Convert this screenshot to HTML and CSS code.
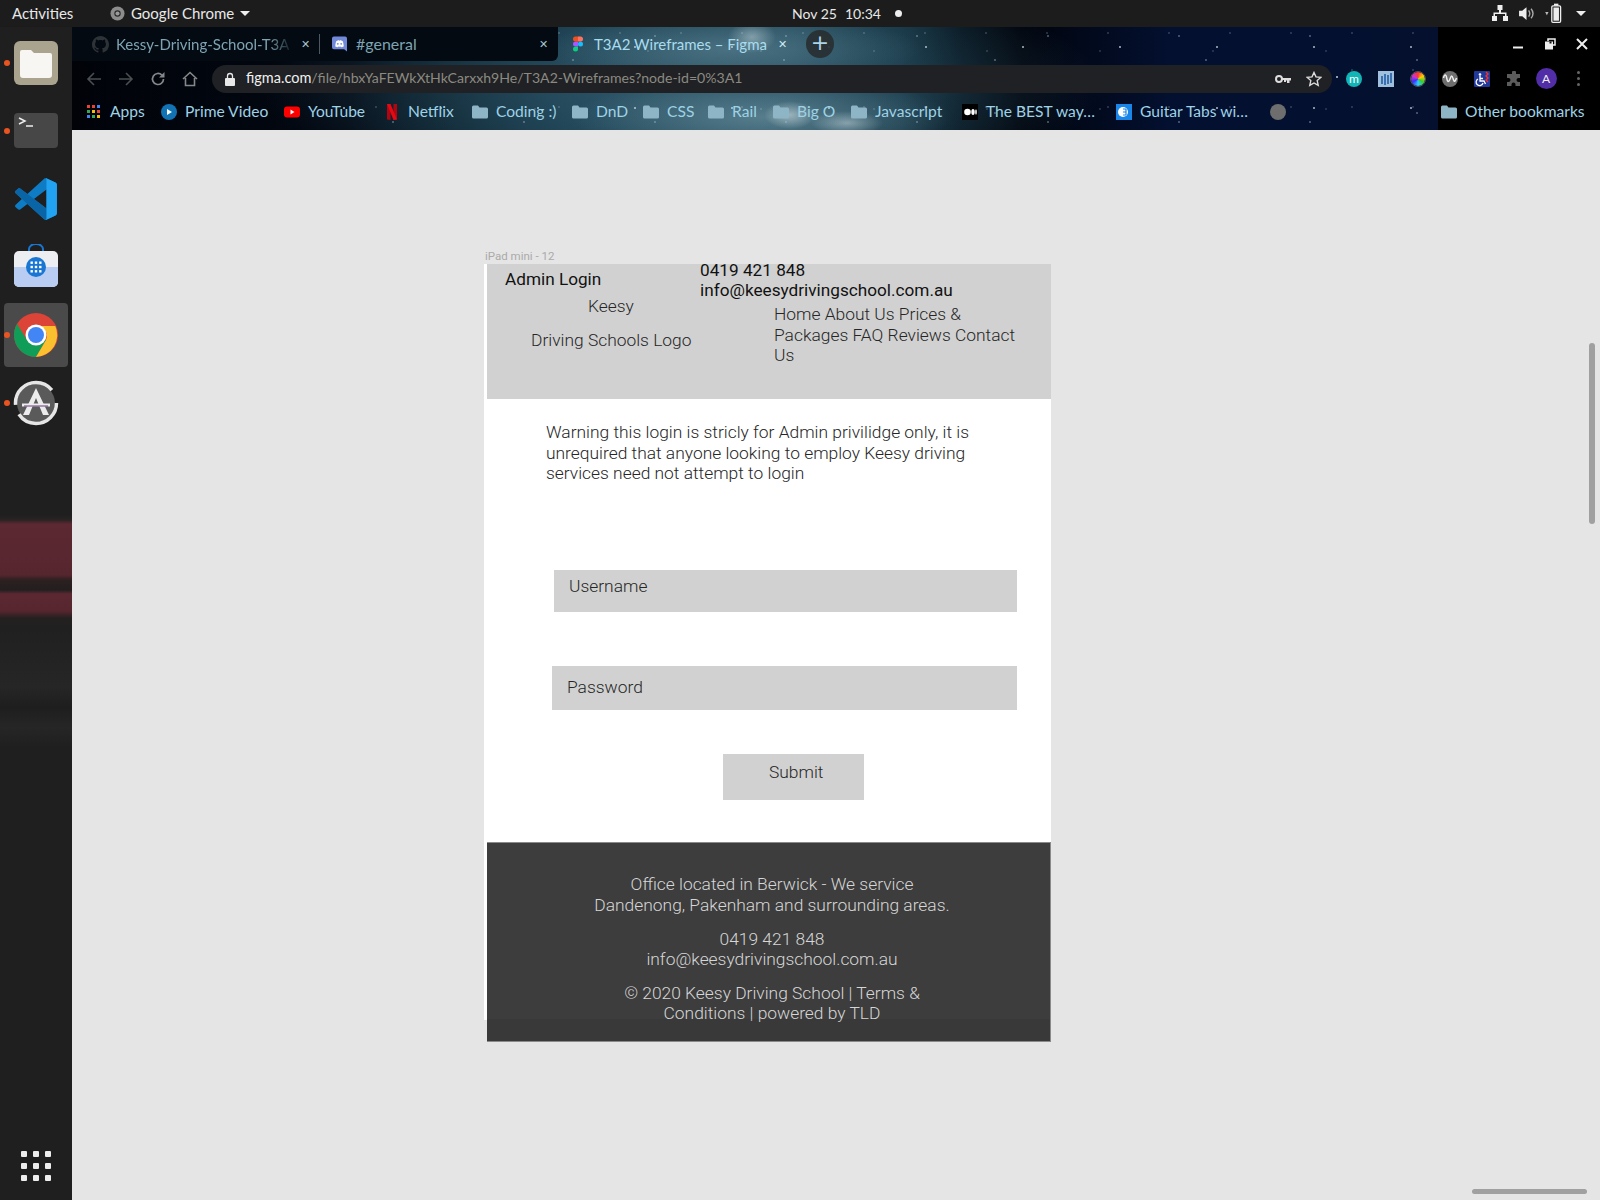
FILE: index.html
```html
<!DOCTYPE html>
<html lang="en">
<head>
<meta charset="utf-8">
<title>T3A2 Wireframes – Figma</title>
<link rel="stylesheet" href="styles.css">
</head>
<body>
<div class="desktop">
  <header class="topbar">
    <div class="tb-left">
      <span class="activities">Activities</span>
      <span class="appname">
        <svg class="tb-chrome" viewBox="0 0 16 16"><circle cx="8" cy="8" r="7.500" fill="#8d8d8d"/><circle cx="8" cy="8" r="3.400" fill="#2a2a2a"/><circle cx="8" cy="8" r="2.200" fill="#9a9a9a"/></svg>
        Google Chrome<i class="caret"></i>
      </span>
    </div>
    <div class="tb-clock"><span>Nov 25</span><span>10:34</span><i class="recdot"></i></div>
    <div class="tb-tray">
      <svg class="tray-net" viewBox="0 0 16 16"><path fill="#eee" d="M5.500 0h5v5H9v2.500h5.500V11H16v5h-5v-5h2V9H3v2h2v5H0v-5h1.500V7.500H7V5H5.500z"/></svg>
      <svg class="tray-vol" viewBox="0 0 16 16"><path fill="#eee" d="M1 5.500h3L8 2v12l-4-3.500H1z"/><path fill="none" stroke="#aaa" stroke-width="1.300" d="M10 5c1.300 1.800 1.300 4.200 0 6M12.300 3.500c2.200 2.700 2.200 6.300 0 9"/></svg>
      <svg class="tray-bat" viewBox="0 0 20 20"><path fill="#bbb" d="M2 9h3l-1.500 3z"/><rect x="8" y="3.500" width="8" height="15" rx="1" fill="none" stroke="#eee" stroke-width="1.200"/><rect x="10" y="1.500" width="4" height="2" fill="#eee"/><rect x="9.500" y="5" width="5" height="12" fill="#eee"/></svg>
      <i class="caret"></i>
    </div>
  </header>

  <nav class="dock">
    <div class="dock-item"><i class="run"></i>
      <svg viewBox="0 0 46 46"><rect x="1" y="1" width="44" height="44" rx="6" fill="#aaa48f"/><path d="M7 12a2 2 0 012-2h9l3 3h16a2 2 0 012 2v20a3 3 0 01-3 3H10a3 3 0 01-3-3z" fill="#f7f6f3"/></svg>
    </div>
    <div class="dock-item"><i class="run"></i>
      <svg viewBox="0 0 46 46"><rect x="1" y="5" width="44" height="35" rx="4" fill="#474747"/><path d="M6 10l6 3-6 3" fill="none" stroke="#eee" stroke-width="1.500"/><path d="M13 18h7" stroke="#eee" stroke-width="1.500"/></svg>
    </div>
    <div class="dock-item">
      <svg viewBox="-5 -5 110 110"><path fill="#0d7cc5" fill-rule="evenodd" d="M70.900 99.300C72.500 99.900 74.300 99.900 75.900 99.100L96.500 89.200C98.600 88.200 100 86 100 83.600V16.400C100 14 98.600 11.800 96.500 10.800L75.900.900C73.800-.1 71.300.1 69.500 1.400 69.300 1.600 69 1.800 68.800 2.100L29.400 38 12.200 25C10.600 23.800 8.400 23.900 6.900 25.200L1.400 30.300C-.5 31.900-.5 34.800 1.400 36.400L16.200 50 1.400 63.600C-.5 65.200-.5 68.100 1.400 69.700L6.900 74.800C8.400 76.100 10.600 76.200 12.200 75L29.400 62 68.800 97.900C69.400 98.500 70.100 99 70.900 99.300ZM75 27.300L45.100 50 75 72.700Z"/><path fill="#0a65a6" d="M96.500 89.200L75.900 99.100C73.500 100.300 70.600 99.800 68.800 97.900L1.300 36.400C-.5 34.800-.5 31.900 1.400 30.300L6.900 25.200C8.400 23.900 10.600 23.800 12.200 25L93.400 86.600C96 88.700 100 86.800 100 83.400V83.600C100 86 98.600 88.200 96.500 89.200Z"/><path fill="#22a3f1" d="M75.900 99.100C73.800 100.100 71.300 99.900 69.500 98.600 71.900 100.800 75 99 75 96V4C75 1 71.900-.8 69.500 1.400 71.300.1 73.800-.1 75.900.900L96.500 10.800C98.600 11.800 100 14 100 16.400V83.600C100 86 98.600 88.200 96.500 89.200Z"/></svg>
    </div>
    <div class="dock-item">
      <svg viewBox="0 2 46 46"><path d="M16 12V7a7 5 0 0114 0v5" fill="none" stroke="#1976d2" stroke-width="2"/><rect x="1" y="9" width="44" height="36" rx="5" fill="#eceef2"/><path d="M1 25h44v15a5 5 0 01-5 5H6a5 5 0 01-5-5z" fill="#b9cdf2"/><circle cx="23" cy="25" r="10" fill="#1976d2"/><g fill="#fff"><rect x="17.500" y="19.500" width="2.400" height="2.400"/><rect x="21.800" y="19.500" width="2.400" height="2.400"/><rect x="26.100" y="19.500" width="2.400" height="2.400"/><rect x="17.500" y="23.800" width="2.400" height="2.400"/><rect x="21.800" y="23.800" width="2.400" height="2.400"/><rect x="26.100" y="23.800" width="2.400" height="2.400"/><rect x="17.500" y="28.100" width="2.400" height="2.400"/><rect x="21.800" y="28.100" width="2.400" height="2.400"/><rect x="26.100" y="28.100" width="2.400" height="2.400"/></g></svg>
    </div>
    <div class="dock-item is-active"><i class="run"></i>
      <svg viewBox="0 0 46 46"><circle cx="23" cy="23" r="22" fill="#db4437"/><path d="M4 12A22 22 0 0023 45L33 28H14z" fill="#0f9d58"/><path d="M23 14H42.300A22 22 0 0123 45L33 28A10 10 0 0023 14z" fill="#fbc02d"/><circle cx="23" cy="23" r="10.500" fill="#fff"/><circle cx="23" cy="23" r="8" fill="#4285f4"/></svg>
    </div>
    <div class="dock-item"><i class="run"></i>
      <svg viewBox="0 0 46 46"><circle cx="23" cy="23" r="19" fill="#5a5a5a"/><circle cx="23" cy="23" r="20.500" fill="none" stroke="#e6e6e6" stroke-width="3.500" stroke-dasharray="52 10 52 15"/><path d="M23 8L10 35h6l7-17 7 17h6z" fill="#ececec"/><path d="M9 25h28" stroke="#ececec" stroke-width="3"/><path d="M11 26h24" stroke="#6a3d80" stroke-width="1"/></svg>
    </div>
    <div class="dock-grid"><i></i><i></i><i></i><i></i><i></i><i></i><i></i><i></i><i></i></div>
  </nav>

  <div class="window">
    <div class="chrome">
      <div class="tabstrip">
        <div class="tabs-dim">
          <div class="tab tab-one">
            <svg class="fav" viewBox="0 0 16 16"><path fill="#2e3338" d="M8 0C3.580 0 0 3.580 0 8c0 3.540 2.290 6.530 5.470 7.590.4.070.55-.17.55-.38 0-.19-.01-.82-.01-1.490-2.010.37-2.530-.49-2.690-.94-.09-.23-.48-.94-.82-1.130-.28-.15-.68-.52-.01-.53.63-.01 1.080.58 1.230.82.72 1.210 1.870.87 2.330.66.07-.52.28-.87.51-1.070-1.780-.2-3.640-.89-3.640-3.950 0-.87.31-1.590.82-2.150-.08-.2-.36-1.020.08-2.120 0 0 .67-.21 2.200.82.64-.18 1.320-.27 2-.27.68 0 1.360.09 2 .27 1.530-1.040 2.200-.82 2.200-.82.44 1.100.16 1.920.08 2.120.51.56.82 1.270.82 2.150 0 3.070-1.870 3.750-3.650 3.950.29.25.54.73.54 1.480 0 1.070-.01 1.930-.01 2.200 0 .21.15.46.55.38A8.013 8.013 0 0016 8c0-4.420-3.580-8-8-8z"/></svg>
            <span class="tab-title is-fading">Kessy-Driving-School-T3A</span>
            <span class="tab-x">✕</span>
          </div>
          <i class="tab-sep"></i>
          <div class="tab tab-two">
            <svg class="fav" viewBox="0 0 16 16"><path fill="#7289da" d="M2 0h12a2 2 0 012 2v14l-3-2.500H2a2 2 0 01-2-2V2a2 2 0 012-2z"/><path fill="#fff" d="M3.500 10.500c0-3 1-5.500 1-5.500 1.500-1 3-1 3-1l.5.700.5-.7s1.500 0 3 1c0 0 1 2.500 1 5.500 0 0-1 1-2.500 1l-.6-.9c-1 .3-1.800.3-2.800 0l-.6.900c-1.500 0-2.500-1-2.500-1z"/><circle cx="6.200" cy="7.800" r="1" fill="#7289da"/><circle cx="9.800" cy="7.800" r="1" fill="#7289da"/></svg>
            <span class="tab-title">#general</span>
            <span class="tab-x">✕</span>
          </div>
        </div>
        <div class="tab tab-active">
          <svg class="fav-figma" viewBox="0 0 10 16"><circle cx="7.500" cy="8" r="2.500" fill="#1abcfe"/><path d="M2.500 10.500H5V13a2.500 2.500 0 11-2.500-2.500z" fill="#0acf83"/><path d="M0 8a2.500 2.500 0 012.500-2.500H5v5H2.500A2.500 2.500 0 010 8z" fill="#a259ff"/><path d="M0 3A2.500 2.500 0 012.500.500H5v5H2.500A2.500 2.500 0 010 3z" fill="#f24e1e"/><path d="M5 .500h2.500a2.500 2.500 0 010 5H5z" fill="#ff7262"/></svg>
          <span class="tab-title active-title">T3A2 Wireframes – Figma</span>
          <span class="tab-x active-x">✕</span>
        </div>
        <div class="newtab">+</div>
        <div class="winctl">
          <svg viewBox="0 0 12 12"><rect x="1" y="8.500" width="10" height="2" fill="#eee"/></svg>
          <svg viewBox="0 0 12 12"><path fill="none" stroke="#eee" stroke-width="1.500" d="M4 3V1h7v6H9"/><rect x="1" y="3.500" width="8" height="8" fill="#eee"/><rect x="5.500" y="3.500" width="2" height="2" fill="#111"/></svg>
          <svg viewBox="0 0 12 12"><path stroke="#eee" stroke-width="2" d="M1 1l10 10M11 1L1 11"/></svg>
        </div>
      </div>

      <div class="toolbar">
        <div class="tb-btn"><svg viewBox="0 0 16 16"><path fill="none" stroke="#4a4f52" stroke-width="1.600" d="M15 8H2M8 2L2 8l6 6"/></svg></div>
        <div class="tb-btn"><svg viewBox="0 0 16 16"><path fill="none" stroke="#4a4f52" stroke-width="1.600" d="M1 8h13M8 2l6 6-6 6"/></svg></div>
        <div class="tb-btn"><svg viewBox="0 0 16 16"><path fill="none" stroke="#85888a" stroke-width="1.700" d="M13.500 8a5.500 5.500 0 11-1.600-3.900"/><path fill="#85888a" d="M14.500 1v5.500H9z"/></svg></div>
        <div class="tb-btn"><svg viewBox="0 0 16 16"><path fill="none" stroke="#85888a" stroke-width="1.600" d="M1 8l7-6.500L15 8M3.500 7v7.500h9V7"/></svg></div>
        <div class="omnibox">
          <svg class="lock" viewBox="0 0 12 14"><rect x="1" y="6" width="10" height="8" rx="1" fill="#e8e8e8"/><path d="M3.500 6V4a2.500 2.500 0 015 0v2" fill="none" stroke="#e8e8e8" stroke-width="1.300"/></svg>
          <span class="url"><b>figma.com</b>/file/hbxYaFEWkXtHkCarxxh9He/T3A2-Wireframes?node-id=0%3A1</span>
          <svg class="key" viewBox="0 0 16 10"><circle cx="4" cy="5" r="3" fill="none" stroke="#ddd" stroke-width="2"/><path d="M7 4h9v2.500h-1.500V9H12V6.500h-1V8H9V6H7z" fill="#ddd"/></svg>
          <svg class="star" viewBox="0 0 16 16"><path fill="none" stroke="#ddd" stroke-width="1.400" d="M8 1.500l2 4.400 4.800.5-3.600 3.200 1 4.700L8 12l-4.200 2.300 1-4.700L1.200 6.400 6 5.900z"/></svg>
        </div>
        <div class="exts">
          <div class="tb-btn"><span class="ext-m">m</span></div>
          <div class="tb-btn"><svg viewBox="0 0 16 16"><rect width="16" height="16" fill="#9fbfdc"/><g fill="#3a6fb0"><rect x="3" y="5" width="2" height="8"/><rect x="6" y="3" width="2" height="11"/><rect x="9" y="4" width="2" height="9"/><rect x="12" y="2" width="2" height="10"/></g></svg></div>
          <div class="tb-btn"><span class="ext-wheel"></span></div>
          <div class="tb-btn"><svg viewBox="0 0 16 16"><circle cx="8" cy="8" r="8" fill="#6e6e6e"/><path fill="none" stroke="#eee" stroke-width="1.500" d="M1.500 7c1-4 2.500-4 3.200 0s1.800 5 3.300 1 2-4 3.200 0 2.200 2 3.300-1"/></svg></div>
          <div class="tb-btn"><svg viewBox="0 0 16 16"><rect width="16" height="16" rx="1" fill="#22399c"/><circle cx="6" cy="3.500" r="1.300" fill="#fff"/><path fill="none" stroke="#fff" stroke-width="1.300" d="M6 5v5h4l1.500 3M6 7.500h3M4 8a3.500 3.500 0 105 4"/><path fill="none" stroke="#e33" stroke-width="1.400" d="M12 1l2 2-2 2 2 2-2 2 2 2"/></svg></div>
          <div class="tb-btn"><svg viewBox="0 0 16 16"><path fill="#5c5c5c" d="M6 1.500a2 2 0 014 0V3h4v4h-1.500a2 2 0 000 4H14v4H9.500v-1.500a2 2 0 00-4 0V15H1v-4h1.500a2 2 0 000-4H1V3h5z"/></svg></div>
          <div class="tb-btn"><span class="avatar">A</span></div>
          <div class="tb-btn"><span class="kebab"><i></i><i></i><i></i></span></div>
        </div>
      </div>

      <div class="bookmarks">
        <div class="bm"><span class="apps"><i class="c1"></i><i class="c2"></i><i class="c3"></i><i class="c4"></i><i class="c5"></i><i class="c6"></i><i class="c7"></i><i class="c8"></i><i class="c9"></i></span>Apps</div>
        <div class="bm"><svg class="bm-ic" viewBox="0 0 16 16"><circle cx="8" cy="8" r="8" fill="#1273b4"/><path fill="#fff" d="M6 5l5 3-5 3z"/></svg>Prime Video</div>
        <div class="bm"><svg class="bm-ic" viewBox="0 0 16 16"><rect y="2.500" width="16" height="11" rx="3" fill="#f00"/><path fill="#fff" d="M6.500 5.500l4 2.500-4 2.500z"/></svg>YouTube</div>
        <div class="bm"><svg class="bm-ic" viewBox="0 0 16 16"><path fill="#b1060f" d="M3 0h3.500v16L3 15.500z"/><path fill="#b1060f" d="M9.500 0H13v15.500L9.500 16z"/><path fill="#e50914" d="M3 0h3.500l6.500 15.500L9.500 16z"/></svg>Netflix</div>
        <div class="bm"><svg class="bm-ic" viewBox="0 0 16 14"><use href="#folder"/></svg>Coding :)</div>
        <div class="bm"><svg class="bm-ic" viewBox="0 0 16 14"><use href="#folder"/></svg>DnD</div>
        <div class="bm"><svg class="bm-ic" viewBox="0 0 16 14"><use href="#folder"/></svg>CSS</div>
        <div class="bm"><svg class="bm-ic" viewBox="0 0 16 14"><use href="#folder"/></svg>Rail</div>
        <div class="bm"><svg class="bm-ic" viewBox="0 0 16 14"><use href="#folder"/></svg>Big O</div>
        <div class="bm"><svg class="bm-ic" viewBox="0 0 16 14"><use href="#folder"/></svg>Javascript</div>
        <div class="bm"><svg class="bm-ic" viewBox="0 0 16 16"><rect width="16" height="16" fill="#000"/><circle cx="5.500" cy="8" r="3.300" fill="#fff"/><ellipse cx="11" cy="8" rx="1.700" ry="3" fill="#fff"/><ellipse cx="14" cy="8" rx=".8" ry="2.700" fill="#fff"/></svg>The BEST way…</div>
        <div class="bm"><svg class="bm-ic" viewBox="0 0 16 16"><rect width="16" height="16" fill="#1a86e8"/><circle cx="7" cy="8" r="5" fill="#fff"/><path stroke="#1a86e8" stroke-width="1.200" fill="none" d="M7 5h3M7 8h3M7 11h3M10 5v6"/></svg>Guitar Tabs wi…</div>
        <div class="bm"><span class="grey-dot"></span></div>
        <div class="bm-other"><svg class="bm-ic" viewBox="0 0 16 14"><use href="#folder"/></svg>Other bookmarks</div>
      </div>
      <svg class="defs" width="0" height="0"><defs><path id="folder" fill="#8db5c6" d="M0 2a1.500 1.500 0 011.500-1.500H6l1.500 2h7A1.500 1.500 0 0116 4v8a1.500 1.500 0 01-1.500 1.500h-13A1.500 1.500 0 010 12z"/></defs></svg>
    </div>

    <main class="canvas">
      <span class="frame-label">iPad mini - 12</span>
      <section class="artboard"></section>
      <div class="a-header"></div>
      <div class="layer t-dark admin">Admin Login</div>
      <div class="layer t-dark contact">0419 421 848<br>info@keesydrivingschool.com.au</div>
      <div class="layer t-gray logo1">Keesy</div>
      <div class="layer t-gray logo2">Driving Schools Logo</div>
      <div class="layer t-gray navtext">Home About Us Prices &amp;<br>Packages FAQ Reviews Contact<br>Us</div>
      <div class="layer t-gray warning">Warning this login is stricly for Admin privilidge only, it is<br>unrequired that anyone looking to employ Keesy driving<br>services need not attempt to login</div>
      <div class="field username">Username</div>
      <div class="field password">Password</div>
      <div class="field submit">Submit</div>
      <footer class="a-footer">
        <p>Office located in Berwick - We service<br>Dandenong, Pakenham and surrounding areas.</p>
        <p>0419 421 848<br>info@keesydrivingschool.com.au</p>
        <p>© 2020 Keesy Driving School | Terms &amp;<br>Conditions | powered by TLD</p>
        <div class="footer-shade"></div>
      </footer>
      <div class="scroll-v"></div>
      <div class="scroll-h"></div>
    </main>
  </div>
</div>
</body>
</html>
```

FILE: styles.css
```css
* { box-sizing: border-box; }
html, body { margin: 0; padding: 0; }
body { width: 1600px; height: 1200px; overflow: hidden; background: #1d1d1d; font-family: "Lato", "Noto Sans", sans-serif; }
svg { display: block; flex: none; }
i { display: block; font-style: normal; }

.desktop { display: grid; grid-template-columns: 72px 1fr; grid-template-rows: 27px 1fr; width: 1600px; height: 1200px; }

/* top bar */
.topbar { grid-column: 1 / 3; display: grid; grid-template-columns: 1fr auto 1fr; align-items: center; height: 27px; padding-bottom: 1px; background: #1c1c1c; color: #e8e8e8; font-size: 15px; }
.tb-left { display: flex; align-items: center; padding-left: 12px; }
.activities { width: 98px; }
.appname { display: flex; align-items: center; }
.tb-chrome { width: 15px; height: 15px; margin-right: 6px; }
.caret { width: 0; height: 0; border-left: 5px solid transparent; border-right: 5px solid transparent; border-top: 5px solid #eee; margin-left: 6px; }
.tb-clock { display: flex; align-items: center; gap: 8px; margin-left: 94px; font-size: 14px; }
.recdot { width: 7px; height: 7px; border-radius: 50%; background: #eee; margin-left: 6px; }
.tb-tray { display: flex; align-items: center; justify-content: flex-end; padding-right: 14px; }
.tray-net { width: 16px; height: 16px; margin-right: 10px; }
.tray-vol { width: 17px; height: 17px; margin-right: 8px; }
.tray-bat { width: 22px; height: 22px; margin-right: 5px; }

/* dock */
.dock { position: relative; display: flex; flex-direction: column; padding-top: 2px;
  background: linear-gradient(180deg, #1f1f1f 0, #1f1f1f 488px, #2a2323 493px, #5c2832 497px, #56262f 548px, #2c2020 553px, #231f1f 563px, #5c2832 567px, #56262f 584px, #242020 591px, #202020 601px, #262626 660px, #1e1e1e 680px, #262626 700px, #1f1f1f 720px); }
.dock-item { position: relative; display: flex; align-items: center; justify-content: center; height: 68px; }
.dock-item svg { width: 46px; height: 46px; }
.dock-item.is-active::before { content: ""; position: absolute; left: 4px; top: 2px; width: 64px; height: 64px; border-radius: 4px; background: #4a4a4a; }
.dock-item.is-active svg { position: relative; }
.run { position: absolute; left: 4px; top: 31px; width: 6px; height: 6px; border-radius: 50%; background: #e95420; z-index: 1; }
.dock-grid { display: grid; grid-template-columns: repeat(3, 6px); gap: 6px; position: absolute; left: 21px; bottom: 19px; }
.dock-grid i { width: 6px; height: 6px; background: #eee; border-radius: 1px; }

/* window */
.window { display: flex; flex-direction: column; min-width: 0; }
.chrome { height: 103px; color: #9ed2e6; font-size: 15.600px; position: relative; display: flex; flex-direction: column; background: #000; }
.chrome::before { content: ""; position: absolute; left: 0; top: 0; bottom: 0; width: 1366px;
  background:
    radial-gradient(ellipse 26px 14px at 718px 88px, rgba(215,228,232,.55), transparent),
    radial-gradient(ellipse 36px 12px at 775px 96px, rgba(205,222,228,.5), transparent),
    radial-gradient(ellipse 24px 16px at 680px 10px, rgba(195,215,222,.5), transparent),
    radial-gradient(ellipse 190px 40px at 690px 90px, rgba(110,148,162,.65), transparent),
    radial-gradient(ellipse 190px 36px at 660px 22px, rgba(95,135,150,.6), transparent),
    radial-gradient(ellipse 420px 120px at 610px 60px, rgba(46,88,106,.95), transparent),
    linear-gradient(90deg, #010309 0, #020812 280px, #0a1f2c 400px, #16384a 520px, #234858 720px, #14303e 830px, #06121c 890px, #01040c 950px, #031030 1100px, #04102e 1366px); }
.chrome::after { content: ""; position: absolute; left: 260px; top: 0; bottom: 0; width: 1106px;
  background:
    radial-gradient(circle at 12px 20px, rgba(215,232,240,.75) 0 .6px, transparent 1.1px) 0 0 / 97px 61px,
    radial-gradient(circle at 61px 9px, rgba(170,195,225,.6) 0 .5px, transparent 1px) 0 0 / 131px 43px,
    radial-gradient(circle at 140px 50px, rgba(220,232,245,.8) 0 .6px, transparent 1.2px) 0 0 / 173px 79px,
    radial-gradient(circle at 30px 33px, rgba(190,210,235,.55) 0 .5px, transparent 1px) 0 0 / 211px 53px,
    radial-gradient(circle at 44px 6px, rgba(210,225,240,.45) 0 .4px, transparent .9px) 0 0 / 61px 37px,
    radial-gradient(circle at 90px 24px, rgba(210,225,240,.4) 0 .4px, transparent .9px) 0 0 / 113px 29px;
}
.tabstrip, .toolbar, .bookmarks { position: relative; z-index: 1; }
.tabstrip { display: flex; align-items: flex-start; height: 35px; }
.tabs-dim { display: flex; align-items: center; width: 486px; height: 34px; background: #040a11; border-radius: 0 0 6px 0; }
.tab { display: flex; align-items: center; height: 34px; }
.tab-one { width: 247px; padding-left: 20px; }
.tab-two { width: 238px; padding-left: 12px; }
.fav { width: 16px; height: 16px; }
.tab-one .fav { width: 17px; height: 17px; margin-right: 7px; }
.tab-two .fav { width: 15px; height: 16px; margin-right: 9px; }
.tab-title { color: #7ea4b3; font-size: 15px; white-space: nowrap; }
.is-fading { width: 173px; flex: none; -webkit-mask-image: linear-gradient(90deg, #000 88%, rgba(0,0,0,.2)); mask-image: linear-gradient(90deg, #000 88%, rgba(0,0,0,.2)); }
.tab-two .tab-title { width: 180px; font-size: 16px; padding-bottom: 1px; }
.tab-x { color: #a8c3cf; font-size: 11px; width: 12px; text-align: center; margin-left: 10px; }
.tab-two .tab-x { margin-left: auto; margin-right: 9px; }
.tab-sep { width: 1px; height: 20px; background: #4a5a62; }
.tab-active { width: 243px; padding-left: 15px; }
.fav-figma { width: 10px; height: 16px; margin-right: 11px; }
.active-title { color: #a9dcef; width: 172px; flex: none; font-size: 15px; }
.active-x { margin-left: 10px; color: #cfe9f3; }
.newtab { width: 28px; height: 28px; margin: 3px 0 0 5px; border-radius: 50%; background: rgba(40,45,48,.9); color: #a9d5e6; font-size: 22px; line-height: 26px; text-align: center; font-family: "DejaVu Sans", sans-serif; }
.winctl { display: flex; gap: 20px; position: absolute; right: 12px; top: 11px; }
.winctl svg { width: 12px; height: 12px; }

.toolbar { display: flex; align-items: center; height: 33px; padding-left: 6px; }
.tb-btn { width: 32px; height: 28px; display: flex; align-items: center; justify-content: center; flex: none; }
.tb-btn svg { width: 16px; height: 16px; }
.omnibox { display: flex; align-items: center; width: 1120px; height: 28px; margin-left: 6px; border-radius: 14px; background: #202124; flex: none; }
.lock { width: 12px; height: 14px; margin-left: 12px; margin-right: 10px; }
.url { flex: 1; color: #8b8a82; font-size: 14.100px; white-space: nowrap; padding-bottom: 2px; }
.url b { color: #f0f0f0; font-weight: 400; font-size: 14.500px; }
.key { width: 16px; height: 10px; margin-right: 15px; }
.star { width: 16px; height: 16px; margin-right: 10px; }
.exts { display: flex; margin-left: 6px; }
.ext-m { width: 16px; height: 16px; border-radius: 50%; background: #12b5b5; color: #fff; font-size: 12px; line-height: 15px; text-align: center; }
.ext-wheel { width: 14px; height: 14px; border-radius: 50%; background: conic-gradient(#f33, #fc0, #3c3, #3cf, #33f, #c3c, #f33); outline: 1px solid #555; }
.avatar { width: 21px; height: 21px; border-radius: 50%; background: #512da8; color: #eee; font-size: 12px; line-height: 21px; text-align: center; }
.kebab { display: flex; flex-direction: column; gap: 3px; }
.kebab i { width: 3px; height: 3px; border-radius: 50%; background: #666; }

.bookmarks { display: grid; grid-template-columns: 74px 123px 100px 88px 100px 71px 65px 65px 78px 111px 154px 154px 171px 1fr; align-items: center; height: 35px; padding: 0 0 4px 15px; }
.bm { display: flex; align-items: center; white-space: nowrap; }
.bm-other { display: flex; align-items: center; white-space: nowrap; }
.bm-ic { width: 16px; height: 16px; margin-right: 8px; margin-top: 2px; }
.apps { display: grid; grid-template-columns: repeat(3, 3px); gap: 2px; margin-right: 10px; margin-top: 2px; }
.apps i { width: 3px; height: 3px; }
.c1 { background: #ea4335; } .c2 { background: #ea4335; } .c3 { background: #4285f4; }
.c4 { background: #34a853; } .c5 { background: #fbbc05; } .c6 { background: #ea4335; }
.c7 { background: #4285f4; } .c8 { background: #34a853; } .c9 { background: #fbbc05; }
.grey-dot { width: 16px; height: 16px; border-radius: 50%; background: #6e6e6e; margin-top: 2px; }
.defs { position: absolute; }

/* figma canvas */
.canvas { position: relative; flex: 1; background: #e5e5e5; font-family: "Roboto", sans-serif; }
.frame-label { position: absolute; left: 413px; top: 120px; font-size: 11.500px; line-height: 13px; color: #aaa; }
.artboard { position: absolute; left: 412px; top: 134px; width: 567px; height: 756px; background: #fff; }
.a-header { position: absolute; left: 415px; top: 134px; width: 564px; height: 135px; background: #d1d1d1; }
.layer { position: absolute; font-size: 17.400px; line-height: 20.600px; white-space: nowrap; font-weight: 300; }
.t-dark { color: #111; font-weight: 400; font-size: 17.200px; }
.t-gray { color: #262626; }
.admin { left: 433px; top: 139px; }
.contact { left: 628px; top: 129.500px; }
.logo1 { left: 516px; top: 166px; }
.logo2 { left: 459px; top: 200px; }
.navtext { left: 702px; top: 174px; }
.warning { left: 474px; top: 292px; }
.field { position: absolute; background: #d1d1d1; color: #262626; font-size: 17.400px; line-height: 20.600px; font-weight: 300; }
.username { left: 482px; top: 440px; width: 463px; height: 42px; padding: 6px 0 0 15px; }
.password { left: 480px; top: 536px; width: 465px; height: 44px; padding: 11px 0 0 15px; }
.submit { left: 651px; top: 624px; width: 141px; height: 46px; padding: 8px 0 0 46px; }
.a-footer { position: absolute; left: 415px; top: 712px; width: 564px; height: 200px; padding-top: 31px; background: #3d3d3d; border: 1px solid #8a8a8a; border-width: 1px 1px 1px 0; color: #d6d6d6; font-size: 17.400px; line-height: 20.600px; font-weight: 300; text-align: center; }
.a-footer p { position: relative; margin: 0 -7px 13px 0; }
.a-footer p:first-child { margin-bottom: 13.500px; }
.footer-shade { position: absolute; left: 0; right: 0; bottom: 0; height: 22px; background: rgba(0,0,0,.06); }
.scroll-v { position: absolute; left: 1517px; top: 213px; width: 6px; height: 181px; border-radius: 3px; background: #a0a0a0; }
.scroll-h { position: absolute; left: 1400px; top: 1059px; width: 115px; height: 5px; border-radius: 3px; background: #a0a0a0; }
```
